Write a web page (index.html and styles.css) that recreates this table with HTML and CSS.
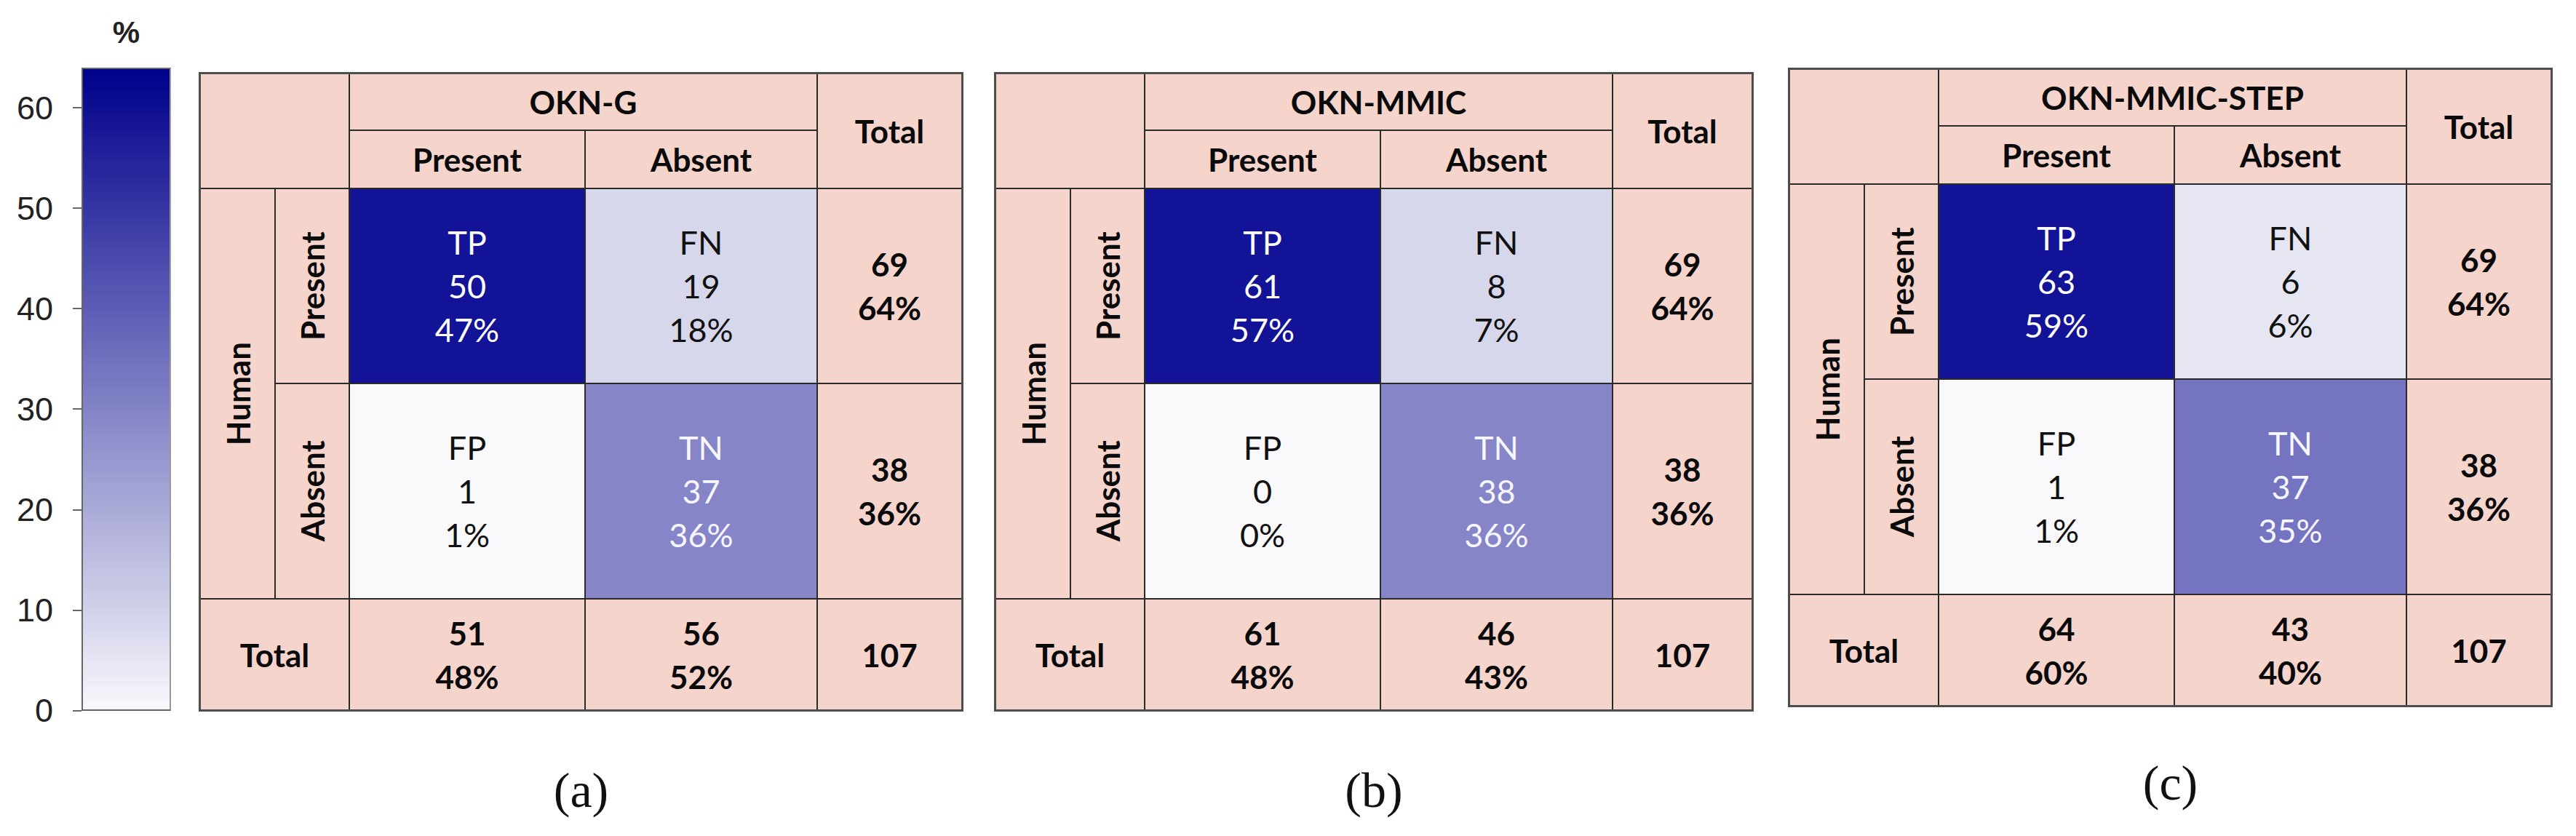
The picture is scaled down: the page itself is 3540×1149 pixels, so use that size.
FILE: index.html
```html
<!DOCTYPE html>
<html lang="en">
<head>
<meta charset="utf-8">
<title>Confusion matrices</title>
<link rel="stylesheet" href="styles.css">
</head>
<body>
<div class="page">
  <div class="legend">
    <div class="legend-title">%</div>
    <div class="legend-body">
      <div class="axis">
        <div class="tick"><span class="tick-label">60</span><span class="tick-mark"></span></div>
        <div class="tick"><span class="tick-label">50</span><span class="tick-mark"></span></div>
        <div class="tick"><span class="tick-label">40</span><span class="tick-mark"></span></div>
        <div class="tick"><span class="tick-label">30</span><span class="tick-mark"></span></div>
        <div class="tick"><span class="tick-label">20</span><span class="tick-mark"></span></div>
        <div class="tick"><span class="tick-label">10</span><span class="tick-mark"></span></div>
        <div class="tick"><span class="tick-label">0</span><span class="tick-mark"></span></div>
      </div>
      <div class="bar"></div>
    </div>
  </div>

  <figure class="panel panel-a">
    <div class="cm">
      <div class="cell corner"></div>
      <div class="cell head model">OKN-G</div>
      <div class="cell head total-head">Total</div>
      <div class="cell head">Present</div>
      <div class="cell head">Absent</div>
      <div class="cell head human"><span class="vert">Human</span></div>
      <div class="cell head"><span class="vert">Present</span></div>
      <div class="cell tp">TP<br>50<br>47%</div>
      <div class="cell fn-hi">FN<br>19<br>18%</div>
      <div class="cell head">69<br>64%</div>
      <div class="cell head"><span class="vert">Absent</span></div>
      <div class="cell fp">FP<br>1<br>1%</div>
      <div class="cell tn">TN<br>37<br>36%</div>
      <div class="cell head">38<br>36%</div>
      <div class="cell head total-label">Total</div>
      <div class="cell head">51<br>48%</div>
      <div class="cell head">56<br>52%</div>
      <div class="cell head">107</div>
    </div>
    <figcaption class="caption">(a)</figcaption>
  </figure>

  <figure class="panel panel-b">
    <div class="cm cm-narrow">
      <div class="cell corner"></div>
      <div class="cell head model">OKN-MMIC</div>
      <div class="cell head total-head">Total</div>
      <div class="cell head">Present</div>
      <div class="cell head">Absent</div>
      <div class="cell head human"><span class="vert">Human</span></div>
      <div class="cell head"><span class="vert">Present</span></div>
      <div class="cell tp">TP<br>61<br>57%</div>
      <div class="cell fn-hi">FN<br>8<br>7%</div>
      <div class="cell head">69<br>64%</div>
      <div class="cell head"><span class="vert">Absent</span></div>
      <div class="cell fp">FP<br>0<br>0%</div>
      <div class="cell tn">TN<br>38<br>36%</div>
      <div class="cell head">38<br>36%</div>
      <div class="cell head total-label">Total</div>
      <div class="cell head">61<br>48%</div>
      <div class="cell head">46<br>43%</div>
      <div class="cell head">107</div>
    </div>
    <figcaption class="caption">(b)</figcaption>
  </figure>

  <figure class="panel panel-c">
    <div class="cm">
      <div class="cell corner"></div>
      <div class="cell head model">OKN-MMIC-STEP</div>
      <div class="cell head total-head">Total</div>
      <div class="cell head">Present</div>
      <div class="cell head">Absent</div>
      <div class="cell head human"><span class="vert">Human</span></div>
      <div class="cell head"><span class="vert">Present</span></div>
      <div class="cell tp">TP<br>63<br>59%</div>
      <div class="cell fn-lo">FN<br>6<br>6%</div>
      <div class="cell head">69<br>64%</div>
      <div class="cell head"><span class="vert">Absent</span></div>
      <div class="cell fp">FP<br>1<br>1%</div>
      <div class="cell tn-dk">TN<br>37<br>35%</div>
      <div class="cell head">38<br>36%</div>
      <div class="cell head total-label">Total</div>
      <div class="cell head">64<br>60%</div>
      <div class="cell head">43<br>40%</div>
      <div class="cell head">107</div>
    </div>
    <figcaption class="caption caption-c">(c)</figcaption>
  </figure>
</div>
</body>
</html>
```

FILE: styles.css
```css
html, body {
  margin: 0;
  padding: 0;
  background: #ffffff;
}

.page {
  display: flex;
  align-items: flex-start;
  width: 3540px;
  height: 1149px;
  overflow: hidden;
}

/* ---------- colour legend ---------- */
.legend {
  flex: none;
  width: 235px;
  padding-top: 24px;
}

.legend-title {
  margin-left: 112px;
  width: 123px;
  height: 42px;
  margin-bottom: 27px;
  text-align: center;
  font: 700 42px/42px "Liberation Sans", Arial, sans-serif;
  color: #222;
}

.legend-body {
  display: flex;
  height: 884px;
}

.axis {
  width: 112px;
  height: 884px;
  box-sizing: border-box;
  padding-top: 55px;
  display: flex;
  flex-direction: column;
  justify-content: space-between;
}

.tick {
  height: 0;
  display: flex;
  align-items: center;
  justify-content: flex-end;
}

.tick-label {
  font: 45px/1 "Liberation Sans", Arial, sans-serif;
  color: #222;
  margin-right: 27px;
}

.tick-mark {
  width: 12px;
  height: 2px;
  background: #666;
}

.bar {
  width: 123px;
  height: 884px;
  box-sizing: border-box;
  border: 2px solid #666;
  border-right-color: #999;
  background: linear-gradient(to bottom, #00008b 0%, #f8f8fc 100%);
}

/* ---------- panels ---------- */
.panel {
  flex: none;
  margin: 0;
  display: flex;
  flex-direction: column;
  align-items: center;
}

.panel-a { margin-left: 38px; margin-top: 99px; }
.panel-b { margin-left: 42px; margin-top: 99px; }
.panel-c { margin-left: 47px; margin-top: 93px; }

.caption {
  margin-top: 74px;
  font: 68px/1 "Liberation Serif", "Times New Roman", serif;
  color: #111;
}

.caption-c { margin-top: 70px; }

/* ---------- confusion matrix ---------- */
.cm {
  display: grid;
  grid-template-columns: 101px 100px 322px 317px 197px;
  grid-template-rows: 76px 78px 266px 294px 151px;
  gap: 2px;
  background: #2a2a2a;
  border: 3px solid #4d4d4d;
}

.cm-narrow {
  grid-template-columns: 101px 100px 322px 317px 190px;
}

.cell {
  background: #f5d4cc;
  display: flex;
  align-items: center;
  justify-content: center;
  text-align: center;
  font: 400 45px/60px "Lato", "Open Sans", sans-serif;
  color: #111;
}

.head {
  font-weight: 700;
  font-size: 44px;
  color: #0a0a0a;
}

.vert {
  writing-mode: vertical-rl;
  transform: rotate(180deg);
  line-height: 1;
}

.corner { grid-column: 1 / 3; grid-row: 1 / 3; }
.model { grid-column: 3 / 5; grid-row: 1; }
.total-head { grid-column: 5; grid-row: 1 / 3; }
.human { grid-column: 1; grid-row: 3 / 5; }
.total-label { grid-column: 1 / 3; }

.tp { background: #131398; color: #ffffff; }
.fn-hi { background: #d7d7ec; }
.fn-lo { background: #e6e6f3; }
.fp { background: #f9f9fc; }
.tn { background: #8585c8; color: #f6f6ff; }
.tn-dk { background: #7474c0; color: #f6f6ff; }
```
